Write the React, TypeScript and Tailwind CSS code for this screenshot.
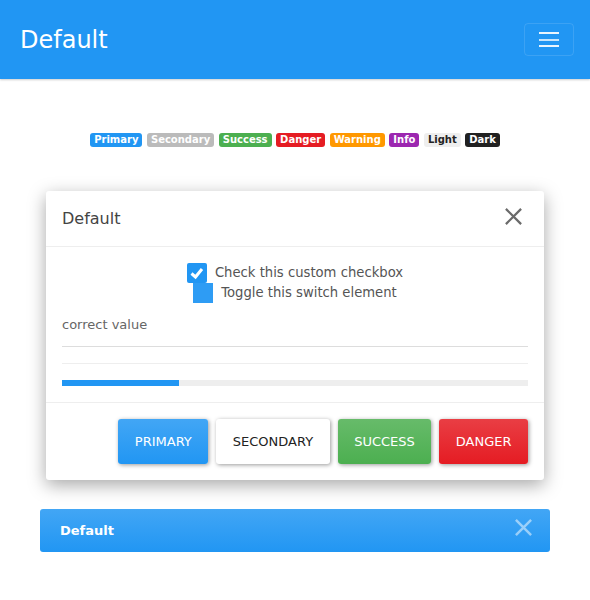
import React from "react";

const badges: { label: string; cls: string }[] = [
  { label: "Primary", cls: "bg-[#2196f3] text-white" },
  { label: "Secondary", cls: "bg-[#bbbbbb] text-white" },
  { label: "Success", cls: "bg-[#4caf50] text-white" },
  { label: "Danger", cls: "bg-[#e51c23] text-white" },
  { label: "Warning", cls: "bg-[#ff9800] text-white" },
  { label: "Info", cls: "bg-[#9c27b0] text-white" },
  { label: "Light", cls: "bg-[#eeeeee] text-[#222222]" },
  { label: "Dark", cls: "bg-[#212121] text-white" },
];

function XIcon({ color, size, stroke }: { color: string; size: number; stroke: number }) {
  return (
    <svg width={size} height={size} viewBox="0 0 20 20">
      <path d="M2 2 L18 18 M18 2 L2 18" stroke={color} strokeWidth={stroke} strokeLinecap="butt" fill="none" />
    </svg>
  );
}

export default function App() {
  return (
    <div className="min-h-[600px] w-full bg-white font-['DejaVu_Sans',sans-serif] text-[13px] text-[#444]">
      {/* Navbar */}
      <div className="flex h-[79px] items-center justify-between bg-[#2196f3] pl-[20px] pr-[16px] shadow-[0_1px_2px_rgba(0,0,0,0.2)]">
        <span className="text-[24px] leading-none text-white">Default</span>
        <button className="flex h-[33px] w-[50px] flex-col items-center justify-center gap-[4.5px] rounded-[4px] border border-[rgba(255,255,255,0.12)]">
          <span className="block h-[2px] w-[20px] bg-[rgba(255,255,255,0.9)]" />
          <span className="block h-[2px] w-[20px] bg-[rgba(255,255,255,0.75)]" />
          <span className="block h-[2px] w-[20px] bg-[rgba(255,255,255,0.9)]" />
        </button>
      </div>

      {/* Badges */}
      <div className="mt-[54px] flex justify-center gap-[4.5px]">
        {badges.map((b) => (
          <span
            key={b.label}
            className={`rounded-[3px] px-[4px] py-[2px] text-[10px] font-bold leading-[10px] ${b.cls}`}
          >
            {b.label}
          </span>
        ))}
      </div>

      {/* Modal */}
      <div className="mx-[46px] mt-[44px] rounded-[3px] bg-white shadow-[0_5px_18px_rgba(0,0,0,0.35)]">
        <div className="flex h-[56px] items-center justify-between border-b border-[#eeeeee] pl-[16px] pr-[21px]">
          <span className="text-[16px] text-[#444]">Default</span>
          <span className="-mt-[5px]">
            <XIcon color="#6b6b6b" size={19} stroke={2.4} />
          </span>
        </div>
        <div className="px-[16px] pb-[16px] pt-[16px]">
          <div className="flex flex-col items-center">
            <div className="flex h-[20px] items-center gap-[8px]">
              <span className="flex h-[20px] w-[20px] items-center justify-center rounded-[2px] bg-[#2196f3]">
                <svg width="20" height="20" viewBox="0 0 20 20">
                  <path d="M4.5 10.5 L8.5 14 L15 6" stroke="white" strokeWidth="3" fill="none" />
                </svg>
              </span>
              <span className="text-[13.2px] text-[#555]">Check this custom checkbox</span>
            </div>
            <div className="flex h-[20px] items-center gap-[8px]">
              <span className="block h-[20px] w-[20px] bg-[#2e9cf4]" />
              <span className="text-[13.2px] text-[#555]">Toggle this switch element</span>
            </div>
          </div>
          <div className="mt-[12px] border-b border-[#dddddd] pb-[12px] leading-[19px] text-[#666]">
            correct value
          </div>
          <div className="mt-[16px] h-[1px] bg-[#eeeeee]" />
          <div className="mt-[16px] h-[6px] w-full bg-[#eeeeee]">
            <div className="h-[6px] w-[25%] bg-[#2196f3]" />
          </div>
        </div>
        <div className="flex justify-end gap-[8px] border-t border-[#eeeeee] p-[16px]">
          <button className="h-[45px] rounded-[3px] bg-[linear-gradient(180deg,#42a6f5,#2196f3)] px-[16.5px] text-[13px] text-white shadow-[1px_1px_4px_rgba(0,0,0,0.4)]">
            PRIMARY
          </button>
          <button className="h-[45px] rounded-[3px] bg-white px-[16.5px] text-[13px] text-[#222] shadow-[1px_1px_4px_rgba(0,0,0,0.4)]">
            SECONDARY
          </button>
          <button className="h-[45px] rounded-[3px] bg-[linear-gradient(180deg,#67bb6a,#4caf50)] px-[16.5px] text-[13px] text-white shadow-[1px_1px_4px_rgba(0,0,0,0.4)]">
            SUCCESS
          </button>
          <button className="h-[45px] rounded-[3px] bg-[linear-gradient(180deg,#e93e44,#e51c23)] px-[16.5px] text-[13px] text-white shadow-[1px_1px_4px_rgba(0,0,0,0.4)]">
            DANGER
          </button>
        </div>
      </div>

      {/* Alert */}
      <div className="mx-[40px] mt-[29px] flex h-[43px] items-center justify-between rounded-[3px] bg-[linear-gradient(180deg,#42a6f5,#2196f3)] pl-[20px] pr-[17px]">
        <span className="font-bold text-white">Default</span>
        <span className="-mt-[7px]">
          <XIcon color="rgba(255,255,255,0.5)" size={19} stroke={2.6} />
        </span>
      </div>
    </div>
  );
}
